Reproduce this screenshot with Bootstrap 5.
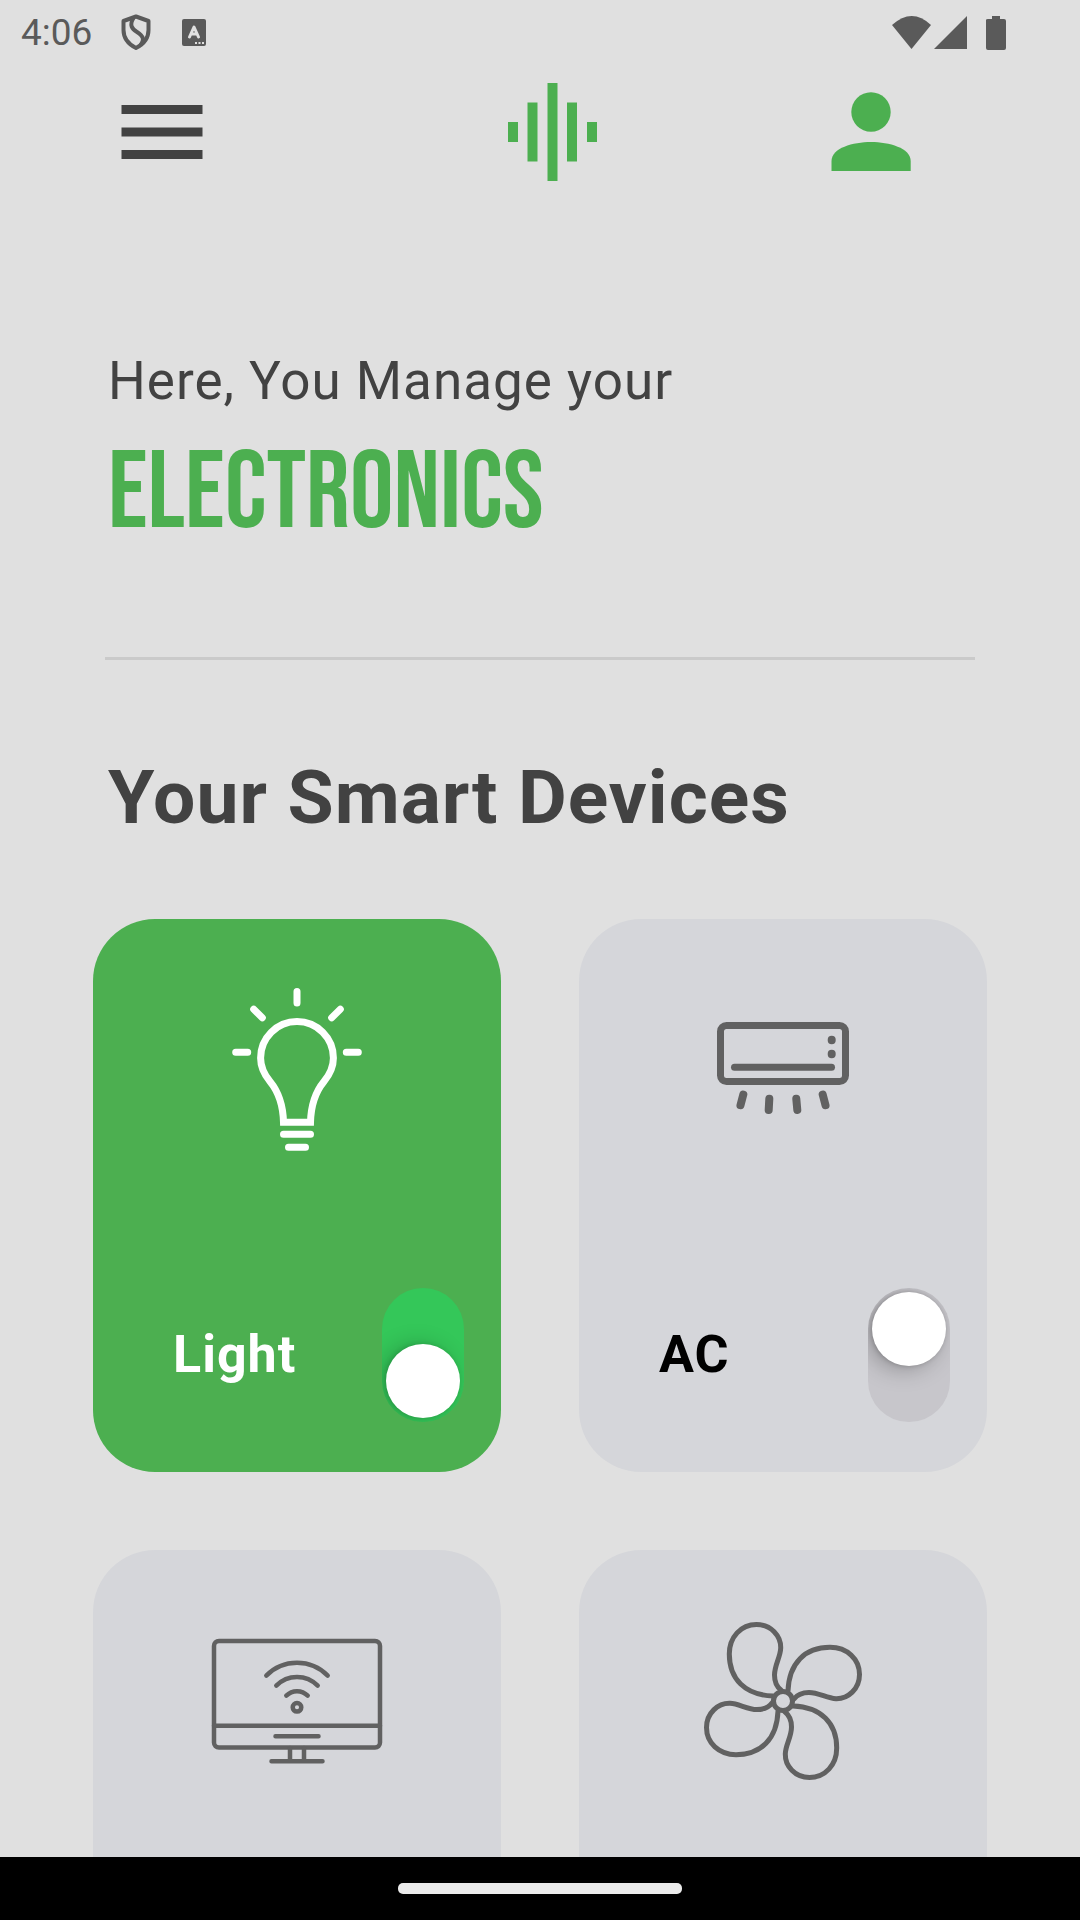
<!DOCTYPE html>
<html lang="en">
<head>
<meta charset="utf-8">
<meta name="viewport" content="width=device-width, initial-scale=1">
<title>Smart Home</title>
<link href="https://cdn.jsdelivr.net/npm/bootstrap@5.3.0/dist/css/bootstrap.min.css" rel="stylesheet">
<style>
  :root { --leaf: #4caf50; --ink: #424242; --line: #616161; --tile: #d5d6da; }
  body { background: #e0e0e0; color: var(--ink); font-family: Roboto, "Liberation Sans", sans-serif; }
  svg { display: block; flex: none; }
  .status-strip { height: 66px; padding: 0 72px 0 21px; color: #5a5a5a; }
  .clock { font-size: 37px; line-height: 66px; }
  .top-bar { padding: 16px 160px 16px 113px; }
  .top-right { gap: 222px; }
  .icon-btn { color: var(--ink); line-height: 1; }
  .icon-btn.leafy { color: var(--leaf); }
  .scroller { overflow-y: auto; scrollbar-width: none; }
  .scroller::-webkit-scrollbar { display: none; }
  .intro { padding: 151px 108px 0; }
  .greeting { font-size: 53px; line-height: 64px; letter-spacing: 1px; }
  .headline { font-family: "Bebas Neue", "Roboto Condensed", "Liberation Sans Narrow", "Liberation Sans", sans-serif; font-weight: 400; font-size: 109px; line-height: 112px; margin: 26px 0 0; color: var(--leaf); }
  .rule { height: 3px; margin: 106px 105px 0; background: #cacaca; opacity: 1; border: 0; }
  .section-title { font-size: 75px; line-height: 88px; font-weight: 700; padding: 93px 108px 0; letter-spacing: 1px; }
  .devices { padding: 78px 93px; }
  .devices > .row { --bs-gutter-x: 78px; --bs-gutter-y: 78px; }
  .device { min-height: 553px; border: 0; border-radius: 62px; background: var(--tile); color: #000; padding: 61px 37px 50px; }
  .device.is-on { background: var(--leaf); color: #fff; }
  .device svg { color: var(--line); fill: none; stroke: currentColor; stroke-linecap: round; stroke-linejoin: round; }
  .device.is-on svg { color: #fff; }
  .device-name { font-size: 52px; line-height: 60px; font-weight: 700; padding-left: 43px; letter-spacing: 1px; }
  .switch-v { appearance: none; width: 82px; height: 134px; margin: 0; padding: 4px; border-radius: 41px; background: #c7c6cb; overflow: hidden; display: flex; align-items: flex-start; cursor: pointer; }
  .switch-v::before { content: ""; width: 74px; height: 74px; border-radius: 50%; background: #fff; box-shadow: -6px 4px 22px rgba(0,0,0,.25), -1px 0 5px rgba(0,0,0,.2); }
  .switch-v:checked { background: #34c759; align-items: flex-end; }
  .switch-v:checked::before { box-shadow: -6px 0 22px rgba(0,0,0,.2), -1px 0 5px rgba(0,0,0,.15); }
  .gesture-bar { height: 63px; background: #000; }
  .gesture-pill { width: 284px; height: 11px; border-radius: 5px; background: #ebebeb; }
</style>
</head>
<body>
<div class="vh-100 d-flex flex-column overflow-hidden">
  <div class="status-strip d-flex align-items-center flex-shrink-0">
    <span class="clock">4:06</span>
    <svg class="ms-auto order-1" width="116" height="40" viewBox="0 1 116 40" fill="currentColor" aria-hidden="true">
      <path d="M0 13Q20-5 39 13L19.500 37Z"/>
      <path d="M42 37L75 4V37Z"/>
      <path d="M94 8Q94 7 96 7H100V4H108V7H112Q114 7 114 9V36Q114 38 112 38H96Q94 38 94 36Z"/>
    </svg>
    <svg class="ms-4" width="90" height="40" viewBox="1 2 90 40" fill="none" stroke="currentColor" aria-hidden="true">
      <path d="M21 5.500L33.500 10V19C33.500 27 29 33 21 37C13 33 8.500 27 8.500 19V10Z" stroke-width="4" stroke-linejoin="round"/>
      <path d="M18.500 7C14 14 17 18 22 21C28 25 30 28 25.500 34" stroke-width="4"/>
      <rect x="67" y="8" width="24" height="27" rx="2" fill="currentColor" stroke="none"/>
      <path d="M74.500 26L79 16L83.500 26M76.500 23H81.500" stroke="#e0e0e0" stroke-width="3" stroke-linecap="round" stroke-linejoin="round"/>
      <path d="M80 32H90" stroke="#e0e0e0" stroke-width="2" stroke-dasharray="2 1.500"/>
    </svg>
  </div>

  <header class="top-bar d-flex align-items-center justify-content-between flex-shrink-0">
    <button type="button" class="icon-btn btn p-0 border-0" aria-label="Menu">
      <svg width="97" height="100" viewBox="0 0 97 100" fill="currentColor"><path d="M8.500 23H89.500V32H8.500ZM8.500 45.500H89.500V54.500H8.500ZM8.500 68H89.500V77H8.500Z"/></svg>
    </button>
    <div class="top-right d-flex">
      <button type="button" class="icon-btn leafy btn p-0 border-0" aria-label="Voice assistant">
        <svg width="97" height="100" viewBox="0 0 97 100" fill="currentColor"><path d="M4 40H14V60H4ZM23.500 20.500H33.500V79.500H23.500ZM43.500 1H53.500V99H43.500ZM63 20.500H73V79.500H63ZM83 40H93V60H83Z"/></svg>
      </button>
      <button type="button" class="icon-btn leafy btn p-0 border-0" aria-label="Profile">
        <svg width="97" height="100" viewBox="0 0 97 100" fill="currentColor"><circle cx="48" cy="30" r="19.700"/><path d="M8.500 89V79C8.500 66 30 60 48 60S87.700 66 87.700 79V89Z"/></svg>
      </button>
    </div>
  </header>

  <main class="scroller flex-grow-1">
    <div class="intro">
      <p class="greeting mb-0">Here, You Manage your</p>
      <h1 class="headline">ELECTRONICS</h1>
    </div>
    <hr class="rule">
    <h2 class="section-title mb-0">Your Smart Devices</h2>
    <div class="devices">
      <div class="row row-cols-2">
        <div class="col">
          <section class="device is-on card h-100">
            <svg class="mx-auto" width="180" height="180" viewBox="0 0 180 180" stroke-width="7" aria-hidden="true">
              <path d="M90 11.500V23M46.700 29.300L55.300 37.700M133.300 29.300L124.700 37.700M28.700 72.300H40.700M139.300 72.300H151.300"/>
              <path stroke-linejoin="miter" d="M76.500 142.300C76 122 70 110 63 101.500C56 93 53.600 86 53.600 78A36.400 36.400 0 0 1 126.400 78C126.400 86 124 93 117 101.500C110 110 104 122 103.500 142.300Z"/>
              <path d="M76.500 154.300H103.500M81.500 167.300H98.500"/>
            </svg>
            <div class="d-flex align-items-center justify-content-between mt-auto">
              <label class="device-name" for="sw-light">Light</label>
              <input class="switch-v" type="checkbox" role="switch" id="sw-light" checked>
            </div>
          </section>
        </div>
        <div class="col">
          <section class="device card h-100">
            <svg class="mx-auto" width="180" height="180" viewBox="0 0 180 180" stroke-width="7" aria-hidden="true">
              <rect x="27.500" y="45.500" width="125" height="56" rx="6"/>
              <path d="M41.500 87.300H138.500"/>
              <path stroke-width="8" d="M50.300 114.600L47.500 125.200M76.300 118.800L75.700 130M103.300 118.800L104.300 130M129.700 114.600L132.500 125.200M138.700 59.800V60.200M138.700 73.800V74.200"/>
            </svg>
            <div class="d-flex align-items-center justify-content-between mt-auto">
              <label class="device-name" for="sw-ac">AC</label>
              <input class="switch-v" type="checkbox" role="switch" id="sw-ac">
            </div>
          </section>
        </div>
        <div class="col">
          <section class="device card h-100" aria-label="TV">
            <svg class="mx-auto" width="180" height="180" viewBox="0 0 180 180" stroke-width="4.500" aria-hidden="true">
              <rect x="7" y="30" width="166" height="106.500" rx="5"/>
              <path d="M7 114.700H173M68.500 125.300H111.500M83 137V150M97 137V150M64.500 150.300H115.500"/>
              <path d="M59.300 64.700A43 43 0 0 1 120.700 64.700M69.300 74.700A29 29 0 0 1 110.700 74.700M79.300 84.700A15 15 0 0 1 100.700 84.700"/>
              <circle cx="90" cy="96.300" r="4.300"/>
            </svg>
          </section>
        </div>
        <div class="col">
          <section class="device card h-100" aria-label="Fan">
            <svg class="mx-auto" width="180" height="180" viewBox="0 0 180 180" stroke-width="5" aria-hidden="true">
              <defs><path id="blade" d="M80 85C52 84 36.300 68 36.300 43C36.300 26 48 13.500 63.500 13.500C78 13.500 88 25 87.700 37C87.500 46 81.500 54 81.500 64C81.500 71 84 76 88 79"/></defs>
              <use href="#blade"/><use href="#blade" transform="rotate(90 90 90)"/><use href="#blade" transform="rotate(180 90 90)"/><use href="#blade" transform="rotate(270 90 90)"/>
              <circle cx="90" cy="90" r="9.500"/>
            </svg>
          </section>
        </div>
      </div>
    </div>
  </main>

  <footer class="gesture-bar d-flex align-items-center justify-content-center flex-shrink-0"><div class="gesture-pill"></div></footer>
</div>
<script src="https://cdn.jsdelivr.net/npm/bootstrap@5.3.0/dist/js/bootstrap.bundle.min.js"></script>
</body>
</html>
